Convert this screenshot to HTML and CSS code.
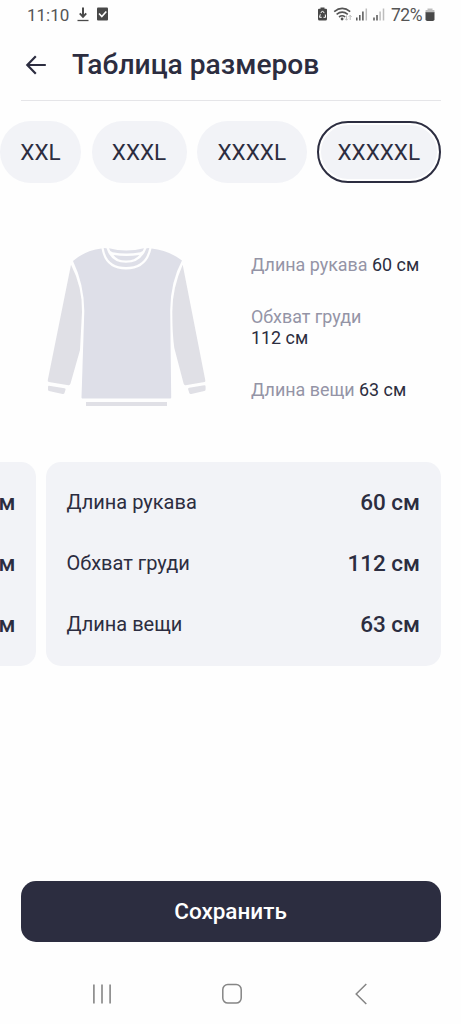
FILE: index.html
```html
<!DOCTYPE html>
<html lang="ru">
<head>
<meta charset="utf-8">
<title>Таблица размеров</title>
<link rel="stylesheet" href="styles.css">
</head>
<body>
<div class="screen">
  <div class="status">
    <span class="clock">11:10</span>
    <svg class="status-left" width="34" height="18" viewBox="0 0 34 18">
      <path d="M6 1.500V11M2.800 7.300 6 10.800l3.200-3.500" fill="none" stroke="#4a4a4a" stroke-width="2"/>
      <path d="M.5 14.500h11" stroke="#4a4a4a" stroke-width="1.300"/>
      <rect x="20" y="1.500" width="11" height="13" rx="1" fill="#484848"/>
      <path d="m22 7.500 2.800 3 4.500-5" fill="none" stroke="#fff" stroke-width="1.600"/>
    </svg>
    <span class="spacer"></span>
    <svg class="status-right" width="70" height="18" viewBox="0 0 70 18">
      <path d="M3.500 1.500h4v1.300H9q1 0 1 1V13q0 1.500-1.500 1.500h-6Q1 14.500 1 13V3.800q0-1 1-1h1.500z" fill="#484848"/>
      <path d="M3.700 7.100 5.500 4.900l1.800 2.200M8.300 8.500l.3 2.800H6.500M4.700 11.300H2.500l.8-3" fill="none" stroke="#fff" stroke-width="1"/>
      <g fill="none" stroke="#555" stroke-width="1.600">
        <path d="M17.200 5.600q8-6.500 16 0M19.600 8.300q5.600-4.300 11.200 0M22 11q3.200-2.400 6.200 0"/>
      </g>
      <circle cx="25.100" cy="13" r="1.400" fill="#555"/>
      <path d="M29.500 9.500v4.700m-1.500-1.500 1.500 1.500 1.500-1.500M33.200 14V9.300m-1.500 1.500 1.500-1.500 1.500 1.500" fill="none" stroke="#bdbdbd" stroke-width="1"/>
      <g stroke-width="1.500">
        <path d="M39.800 14.500v-3M42.800 14.500V9M45.900 14.500V5.500M57 14.500v-3M60 14.500V9" stroke="#555"/>
        <path d="M49.300 14.500v-12M63.100 14.500V5.500M66.500 14.500v-12" stroke="#bdbdbd"/>
      </g>
    </svg>
    <span class="percent">72%</span>
    <svg width="10" height="18" viewBox="0 0 10 18">
      <path d="M2.500 2.500h5V4H9q.5 0 .5.700V7H.5V4.700Q.5 4 1 4h1.500z" fill="#bdbdbd"/>
      <path d="M.5 6.200h9v7q0 1.800-1.800 1.800H2.300Q.5 15 .5 13.200z" fill="#484848"/>
    </svg>
  </div>

  <header class="header">
    <svg class="back" width="22" height="20" viewBox="0 0 22 20">
      <path d="M20.800 10H2.500M10.800 1.200 2.300 10l8.500 8.800" fill="none" stroke="#2c2d40" stroke-width="2.200"/>
    </svg>
    <h1 class="title">Таблица размеров</h1>
  </header>

  <div class="sizes">
    <div class="pill pill-xxl">XXL</div>
    <div class="pill pill-xxxl">XXXL</div>
    <div class="pill pill-xxxxl">XXXXL</div>
    <div class="pill pill-active">XXXXXL</div>
  </div>

  <section class="preview">
    <svg class="sweater" width="164" height="162" viewBox="0 0 164 162">
      <g fill="#dedfe8">
        <path d="M56.500 1.500Q60 22.500 81 22.500T106.500 1.500Q123 3 137 13.500 125.500 34.500 125.200 63L126.200 150.500q0 1-1 1H37.500q-1 0-1-1L39.300 64Q39 37 28 14 40 3.500 56.500 1.500z"/>
        <path d="M58.700 1 61.500 1.200Q66 15.800 81 15.800T101.500 1.200L104.300 1Q100.500 20 81 20T58.700 1z"/>
        <path d="M64 1.200Q81 6 99 1.200 98.500 4 95.500 5.200 81 8 67.500 5.200 64.500 4 64 1.200z"/>
        <path d="M68.500 8Q81 10.200 94.500 8 90 13.500 81 13.500T68.500 8z"/>
      </g>
      <g fill="#e0e0e6">
        <path d="M26 17.800Q37.500 40 37 65L35 103 25.500 136.500q-.5 2-2 1.800L3.800 135q-1.500-.3-1-2z"/>
        <path d="M137.700 17.800Q127.300 41 127.300 65q0 22 2 36l9.300 35.500q.5 2 2 1.800l19-3.300q1-.3.700-1.800z"/>
        <path d="m4 138.800 15.500 2.400q1.500.2 1 1.500l-1 3.300q-.4 1.300-2 1L4 144q-1-.3-1-1.500v-2.500q0-1.300 1-1.200zM159.300 138.300l-15 2.500q-1.500.3-1.200 1.500l1.200 3.700q.4 1.300 2 1l13-3q1.300-.3 1.300-1.500v-3q0-1.300-1.300-1.200z"/>
        <path d="M41 155h81v4H41z"/>
      </g>
    </svg>
    <div class="facts">
      <p class="fact">Длина рукава <b>60 см</b></p>
      <p class="fact">Обхват груди<br><b>112 см</b></p>
      <p class="fact">Длина вещи <b>63 см</b></p>
    </div>
  </section>

  <div class="cards">
    <div class="card card-prev">
      <div class="row"><span class="value">м</span></div>
      <div class="row"><span class="value">м</span></div>
      <div class="row"><span class="value">м</span></div>
    </div>
    <div class="card card-current">
      <div class="row"><span class="label">Длина рукава</span><span class="value">60 см</span></div>
      <div class="row"><span class="label">Обхват груди</span><span class="value">112 см</span></div>
      <div class="row"><span class="label">Длина вещи</span><span class="value">63 см</span></div>
    </div>
  </div>

  <button class="save">Сохранить</button>

  <nav class="navbar">
    <svg width="20" height="22" viewBox="0 0 20 22"><path d="M1.900 1.500v19M10 1.500v19M18.100 1.500v19" stroke="#858585" stroke-width="1.600"/></svg>
    <svg width="20" height="22" viewBox="0 0 20 22"><rect x=".8" y="1.500" width="18.400" height="18.600" rx="5" fill="none" stroke="#858585" stroke-width="1.500"/></svg>
    <svg width="20" height="22" viewBox="0 0 20 22"><path d="M15.300 1 5.200 11l10.100 10" fill="none" stroke="#858585" stroke-width="1.500"/></svg>
  </nav>
</div>
</body>
</html>
```
FILE: styles.css
```css
* { box-sizing: border-box; }
body { margin: 0; background: #fefefe; font-family: Roboto, "Noto Sans", sans-serif; color: #2c2d40; }
.screen { width: 461px; height: 1024px; overflow: hidden; display: flex; flex-direction: column; }
.status { height: 30px; padding: 0 26px 0 27px; display: flex; align-items: center; color: #555; flex: none; }
.clock { font-size: 17px; letter-spacing: 0; width: 50px; }
.spacer { flex: 1; }
.status-right { margin-right: 4px; }
.percent { font-size: 17.500px; letter-spacing: -.5px; width: 34px; }
.header { height: 71px; margin: 0 20.500px; padding-left: 4.500px; border-bottom: 1px solid #e5e5e8; display: flex; align-items: center; gap: 25px; flex: none; }
.title { margin: 0; font-size: 28.200px; font-weight: 500; line-height: 34px; }
.sizes { display: flex; gap: 10.500px; margin-top: 20px; height: 62px; flex: none; }
.pill { border-radius: 31px; background: #f2f3f7; font-size: 22.500px; display: flex; align-items: center; justify-content: center; flex: none; padding-bottom: 1px; }
.pill-xxl { width: 81px; }
.pill-xxxl { width: 95px; }
.pill-xxxxl { width: 109.500px; }
.pill-active { width: 123.500px; border: 2.500px solid #2c2d40; box-shadow: inset 0 0 0 2px #fefefe; }
.preview { height: 278.500px; display: flex; padding: 64px 20px 0 45px; flex: none; }
.facts { margin-left: 42px; padding-top: 7px; display: flex; flex-direction: column; gap: 31px; }
.fact { margin: 0; font-size: 17.900px; line-height: 21px; color: #9494a6; white-space: nowrap; }
.fact b { font-weight: 400; color: #2c2d40; }
.cards { display: flex; gap: 10px; height: 204.500px; flex: none; }
.card { background: #f2f3f7; border-radius: 15px; padding: 9.500px 20.500px; display: flex; flex-direction: column; }
.card-prev { width: 36px; padding-left: 0; border-radius: 0 15px 15px 0; }
.card-current { width: 394.500px; }
.row { height: 61.400px; display: flex; align-items: center; justify-content: space-between; }
.card-prev .row { justify-content: flex-end; }
.label { font-size: 20px; }
.value { font-size: 22.500px; font-weight: 500; }
.save { margin: 215px 20.500px 0; height: 61px; flex: none; border: 0; border-radius: 15px; background: #2c2d40; color: #fff; font: 500 22.500px Roboto, sans-serif; padding: 0 0 2px; }
.navbar { flex: 1; display: flex; justify-content: space-between; align-items: center; padding: 21px 90px 0 92px; }
```
